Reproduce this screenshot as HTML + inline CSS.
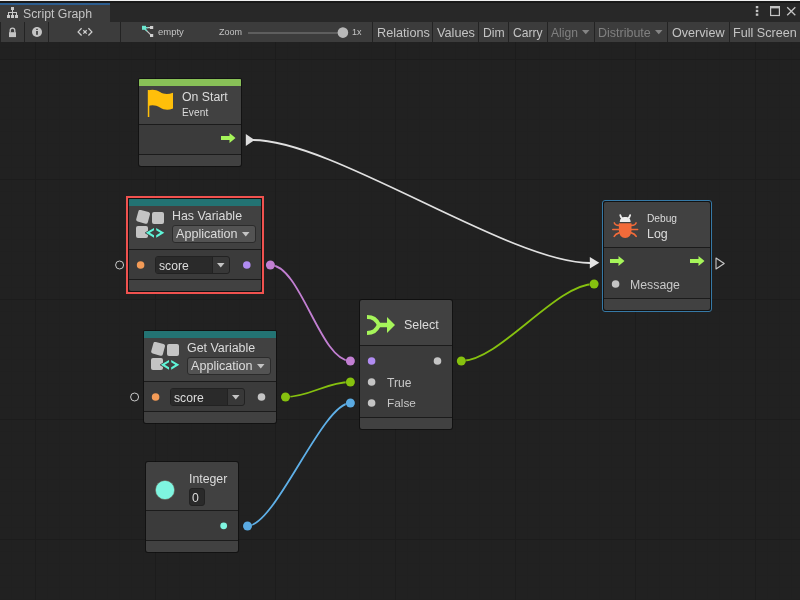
<!DOCTYPE html><html><head><meta charset="utf-8"><style>
*{margin:0;padding:0;box-sizing:border-box}
html,body{width:800px;height:600px;overflow:hidden;background:#202020;font-family:"Liberation Sans",sans-serif;color:#d2d2d2}
.a{position:absolute}
.tb{position:absolute;top:22px;height:20px;background:#3c3c3c;font-size:12px;line-height:20px;color:#c4c4c4;white-space:nowrap}
.dis{color:#808080}
.node{position:absolute;background:#3c3c3c;border-radius:2px;box-shadow:0 0 0 1px rgba(0,0,0,.45)}
.sec{position:absolute;left:0;right:0}
.t{position:absolute;white-space:nowrap;line-height:1;will-change:transform}
.dot{position:absolute;border-radius:50%}
</style></head><body>
<svg class="a" style="left:0;top:0" width="800" height="600"><rect x="0" y="42" width="800" height="558" fill="#212121"/><rect x="11" y="42" width="1" height="558" fill="#202020"/><rect x="23" y="42" width="1" height="558" fill="#202020"/><rect x="47" y="42" width="1" height="558" fill="#202020"/><rect x="59" y="42" width="1" height="558" fill="#202020"/><rect x="71" y="42" width="1" height="558" fill="#202020"/><rect x="83" y="42" width="1" height="558" fill="#202020"/><rect x="95" y="42" width="1" height="558" fill="#202020"/><rect x="107" y="42" width="1" height="558" fill="#202020"/><rect x="119" y="42" width="1" height="558" fill="#202020"/><rect x="131" y="42" width="1" height="558" fill="#202020"/><rect x="143" y="42" width="1" height="558" fill="#202020"/><rect x="167" y="42" width="1" height="558" fill="#202020"/><rect x="179" y="42" width="1" height="558" fill="#202020"/><rect x="191" y="42" width="1" height="558" fill="#202020"/><rect x="203" y="42" width="1" height="558" fill="#202020"/><rect x="215" y="42" width="1" height="558" fill="#202020"/><rect x="227" y="42" width="1" height="558" fill="#202020"/><rect x="239" y="42" width="1" height="558" fill="#202020"/><rect x="251" y="42" width="1" height="558" fill="#202020"/><rect x="263" y="42" width="1" height="558" fill="#202020"/><rect x="287" y="42" width="1" height="558" fill="#202020"/><rect x="299" y="42" width="1" height="558" fill="#202020"/><rect x="311" y="42" width="1" height="558" fill="#202020"/><rect x="323" y="42" width="1" height="558" fill="#202020"/><rect x="335" y="42" width="1" height="558" fill="#202020"/><rect x="347" y="42" width="1" height="558" fill="#202020"/><rect x="359" y="42" width="1" height="558" fill="#202020"/><rect x="371" y="42" width="1" height="558" fill="#202020"/><rect x="383" y="42" width="1" height="558" fill="#202020"/><rect x="407" y="42" width="1" height="558" fill="#202020"/><rect x="419" y="42" width="1" height="558" fill="#202020"/><rect x="431" y="42" width="1" height="558" fill="#202020"/><rect x="443" y="42" width="1" height="558" fill="#202020"/><rect x="455" y="42" width="1" height="558" fill="#202020"/><rect x="467" y="42" width="1" height="558" fill="#202020"/><rect x="479" y="42" width="1" height="558" fill="#202020"/><rect x="491" y="42" width="1" height="558" fill="#202020"/><rect x="503" y="42" width="1" height="558" fill="#202020"/><rect x="527" y="42" width="1" height="558" fill="#202020"/><rect x="539" y="42" width="1" height="558" fill="#202020"/><rect x="551" y="42" width="1" height="558" fill="#202020"/><rect x="563" y="42" width="1" height="558" fill="#202020"/><rect x="575" y="42" width="1" height="558" fill="#202020"/><rect x="587" y="42" width="1" height="558" fill="#202020"/><rect x="599" y="42" width="1" height="558" fill="#202020"/><rect x="611" y="42" width="1" height="558" fill="#202020"/><rect x="623" y="42" width="1" height="558" fill="#202020"/><rect x="647" y="42" width="1" height="558" fill="#202020"/><rect x="659" y="42" width="1" height="558" fill="#202020"/><rect x="671" y="42" width="1" height="558" fill="#202020"/><rect x="683" y="42" width="1" height="558" fill="#202020"/><rect x="695" y="42" width="1" height="558" fill="#202020"/><rect x="707" y="42" width="1" height="558" fill="#202020"/><rect x="719" y="42" width="1" height="558" fill="#202020"/><rect x="731" y="42" width="1" height="558" fill="#202020"/><rect x="743" y="42" width="1" height="558" fill="#202020"/><rect x="767" y="42" width="1" height="558" fill="#202020"/><rect x="779" y="42" width="1" height="558" fill="#202020"/><rect x="791" y="42" width="1" height="558" fill="#202020"/><rect x="0" y="47" width="800" height="1" fill="#202020"/><rect x="0" y="71" width="800" height="1" fill="#202020"/><rect x="0" y="83" width="800" height="1" fill="#202020"/><rect x="0" y="95" width="800" height="1" fill="#202020"/><rect x="0" y="107" width="800" height="1" fill="#202020"/><rect x="0" y="119" width="800" height="1" fill="#202020"/><rect x="0" y="131" width="800" height="1" fill="#202020"/><rect x="0" y="143" width="800" height="1" fill="#202020"/><rect x="0" y="155" width="800" height="1" fill="#202020"/><rect x="0" y="167" width="800" height="1" fill="#202020"/><rect x="0" y="191" width="800" height="1" fill="#202020"/><rect x="0" y="203" width="800" height="1" fill="#202020"/><rect x="0" y="215" width="800" height="1" fill="#202020"/><rect x="0" y="227" width="800" height="1" fill="#202020"/><rect x="0" y="239" width="800" height="1" fill="#202020"/><rect x="0" y="251" width="800" height="1" fill="#202020"/><rect x="0" y="263" width="800" height="1" fill="#202020"/><rect x="0" y="275" width="800" height="1" fill="#202020"/><rect x="0" y="287" width="800" height="1" fill="#202020"/><rect x="0" y="311" width="800" height="1" fill="#202020"/><rect x="0" y="323" width="800" height="1" fill="#202020"/><rect x="0" y="335" width="800" height="1" fill="#202020"/><rect x="0" y="347" width="800" height="1" fill="#202020"/><rect x="0" y="359" width="800" height="1" fill="#202020"/><rect x="0" y="371" width="800" height="1" fill="#202020"/><rect x="0" y="383" width="800" height="1" fill="#202020"/><rect x="0" y="395" width="800" height="1" fill="#202020"/><rect x="0" y="407" width="800" height="1" fill="#202020"/><rect x="0" y="431" width="800" height="1" fill="#202020"/><rect x="0" y="443" width="800" height="1" fill="#202020"/><rect x="0" y="455" width="800" height="1" fill="#202020"/><rect x="0" y="467" width="800" height="1" fill="#202020"/><rect x="0" y="479" width="800" height="1" fill="#202020"/><rect x="0" y="491" width="800" height="1" fill="#202020"/><rect x="0" y="503" width="800" height="1" fill="#202020"/><rect x="0" y="515" width="800" height="1" fill="#202020"/><rect x="0" y="527" width="800" height="1" fill="#202020"/><rect x="0" y="551" width="800" height="1" fill="#202020"/><rect x="0" y="563" width="800" height="1" fill="#202020"/><rect x="0" y="575" width="800" height="1" fill="#202020"/><rect x="0" y="587" width="800" height="1" fill="#202020"/><rect x="0" y="599" width="800" height="1" fill="#202020"/><rect x="35" y="42" width="1" height="558" fill="#1c1c1c"/><rect x="155" y="42" width="1" height="558" fill="#1c1c1c"/><rect x="275" y="42" width="1" height="558" fill="#1c1c1c"/><rect x="395" y="42" width="1" height="558" fill="#1c1c1c"/><rect x="515" y="42" width="1" height="558" fill="#1c1c1c"/><rect x="635" y="42" width="1" height="558" fill="#1c1c1c"/><rect x="755" y="42" width="1" height="558" fill="#1c1c1c"/><rect x="0" y="59" width="800" height="1" fill="#1c1c1c"/><rect x="0" y="179" width="800" height="1" fill="#1c1c1c"/><rect x="0" y="299" width="800" height="1" fill="#1c1c1c"/><rect x="0" y="419" width="800" height="1" fill="#1c1c1c"/><rect x="0" y="539" width="800" height="1" fill="#1c1c1c"/></svg>
<div class="a" style="left:0;top:0;width:800px;height:22px;background:#282828"></div>
<div class="a" style="left:0;top:0;width:800px;height:1px;background:#f0f0f0"></div>
<div class="a" style="left:0;top:1px;width:800px;height:2px;background:#191919"></div>
<div class="a" style="left:0;top:3px;width:110px;height:19px;background:#3c3c3c;border-top:2px solid #2c5d8f"></div>
<svg class="a" style="left:0;top:0" width="22" height="22" viewBox="0 0 22 22" shape-rendering="crispEdges"><rect x="11" y="7" width="3" height="3" fill="#c8c8c8"/><rect x="12" y="10" width="1" height="2" fill="#c8c8c8"/><rect x="8" y="12" width="9" height="1" fill="#c8c8c8"/><rect x="8" y="12" width="1" height="3" fill="#c8c8c8"/><rect x="12" y="12" width="1" height="3" fill="#c8c8c8"/><rect x="16" y="12" width="1" height="3" fill="#c8c8c8"/><rect x="7" y="15" width="3" height="3" fill="#c8c8c8"/><rect x="11" y="15" width="3" height="3" fill="#c8c8c8"/><rect x="15" y="15" width="3" height="3" fill="#c8c8c8"/></svg>
<div class="t" style="left:23px;top:7.99px;font-size:12.3px;color:#c4c4c4;">Script Graph</div>
<svg class="a" style="left:740px;top:0" width="60" height="22" viewBox="740 0 60 22"><rect x="755.8" y="6" width="2.5" height="2.3" fill="#c4c4c4"/><rect x="755.8" y="9.8" width="2.5" height="2.3" fill="#c4c4c4"/><rect x="755.8" y="13.5" width="2.5" height="2.3" fill="#c4c4c4"/><rect x="770.6" y="6.6" width="8.8" height="8.9" fill="none" stroke="#c4c4c4" stroke-width="1.2"/><rect x="770.6" y="6.6" width="8.8" height="1.8" fill="#c4c4c4"/><path d="M787.2 7.2 L795.3 15.2 M795.3 7.2 L787.2 15.2" stroke="#c4c4c4" stroke-width="1.3"/></svg>
<div class="a" style="left:0;top:22px;width:800px;height:20px;background:#232323"></div>
<div class="tb " style="left:1px;width:23px"></div>
<div class="tb " style="left:25px;width:23px"></div>
<div class="tb " style="left:49px;width:71px"></div>
<div class="tb " style="left:121px;width:251px"></div>
<div class="tb " style="left:373px;width:59px"></div>
<div class="tb " style="left:433px;width:45px"></div>
<div class="tb " style="left:479px;width:29px"></div>
<div class="tb " style="left:509px;width:38px"></div>
<div class="tb " style="left:548px;width:46px"></div>
<div class="tb " style="left:595px;width:72px"></div>
<div class="tb " style="left:668px;width:61px"></div>
<div class="tb " style="left:730px;width:71px"></div>
<svg class="a" style="left:8px;top:27px" width="9" height="11" viewBox="0 0 9 11"><path d="M2.2 5.5 V3.4 A2.3 2.3 0 0 1 6.8 3.4 V5.5" fill="none" stroke="#c4c4c4" stroke-width="1.3"/><rect x="1" y="5.2" width="7" height="4.9" fill="#c4c4c4"/></svg>
<svg class="a" style="left:32px;top:27px" width="10" height="10" viewBox="0 0 10 10"><circle cx="5" cy="4.95" r="5" fill="#c4c4c4"/><rect x="4.15" y="4" width="1.7" height="3.8" fill="#3c3c3c"/><rect x="4.15" y="1.8" width="1.7" height="1.1" fill="#3c3c3c"/></svg>
<svg class="a" style="left:70px;top:24px" width="30" height="16" viewBox="70 24 30 16"><path d="M81.6 28.3 L78.1 31.9 L81.6 35.5 M88.4 28.3 L91.9 31.9 L88.4 35.5 M83.3 30.2 L86.7 33.6 M86.7 30.2 L83.3 33.6" fill="none" stroke="#cfcfcf" stroke-width="1.25"/></svg>
<svg class="a" style="left:136px;top:22px" width="24" height="20" viewBox="136 22 24 20"><path d="M144 27.6 H151 M144.5 28.6 L151.6 35.6" stroke="#c4c4c4" stroke-width="1.3"/><path d="M145 27.6 H148 M145.5 29.6 L147 31" stroke="#6cdcc8" stroke-width="1.3"/><rect x="142" y="25.8" width="4" height="4" fill="#6ce8d0"/><rect x="150" y="26" width="3.2" height="3" fill="#d0d0d0"/><rect x="150" y="34" width="3.2" height="3" fill="#d0d0d0"/></svg>
<div class="t" style="left:158px;top:26.5px;font-size:9.5px;color:#c4c4c4">empty</div>
<div class="t" style="left:219px;top:27.7px;font-size:9px;color:#c4c4c4">Zoom</div>
<div class="a" style="left:248px;top:32px;width:95px;height:2px;background:#5e5e5e"></div>
<svg class="a" style="left:330px;top:22px" width="20" height="20" viewBox="330 22 20 20"><circle cx="342.9" cy="32.6" r="5.3" fill="#b8b8b8"/></svg>
<div class="t" style="left:352px;top:27.7px;font-size:9px;color:#c4c4c4">1x</div>
<div class="t" style="left:376.5px;top:26.85px;font-size:12.7px;color:#c4c4c4;">Relations</div>
<div class="t" style="left:436.5px;top:26.85px;font-size:12.7px;color:#c4c4c4;">Values</div>
<div class="t" style="left:483px;top:27.27px;font-size:12.2px;color:#c4c4c4;">Dim</div>
<div class="t" style="left:512.5px;top:27.36px;font-size:12.1px;color:#c4c4c4;">Carry</div>
<div class="t" style="left:551px;top:27.36px;font-size:12.1px;color:#808080;">Align</div>
<div class="t" style="left:598px;top:27.02px;font-size:12.5px;color:#808080;">Distribute</div>
<div class="t" style="left:672px;top:26.93px;font-size:12.6px;color:#c4c4c4;">Overview</div>
<div class="t" style="left:732.5px;top:26.93px;font-size:12.6px;color:#c4c4c4;">Full Screen</div>
<svg class="a" style="left:582.3px;top:29.8px" width="8" height="5"><path d="M0 0 H7.5 L3.75 4.3 Z" fill="#858585"/></svg>
<svg class="a" style="left:655px;top:29.8px" width="8" height="5"><path d="M0 0 H7.5 L3.75 4.3 Z" fill="#858585"/></svg>
<div class="node" style="left:139px;top:79px;width:102px;height:87px;background:#414141;overflow:hidden;border-radius:1px 1px 2px 2px"><div class="sec" style="top:0;height:7px;background:#88c057"></div><div class="sec" style="top:45px;height:1px;background:#1b1b1b"></div><div class="sec" style="top:46px;height:29px;background:#3b3b3b"></div><div class="sec" style="top:75px;height:1px;background:#1b1b1b"></div></div>
<svg class="a" style="left:147px;top:89px" width="27" height="29" viewBox="0 0 27 29"><rect x="0.8" y="1" width="1.5" height="27" fill="#ffbf0a"/><path d="M1 1.5 C5 0 9 0.5 13 3 C17 5.5 21 5.5 26 3.8 V19.5 C21 21.5 17 21 13 18.5 C9 16 5 15.8 1 17 Z" fill="#ffbf0a"/></svg>
<div class="t" style="left:181.6px;top:90.59px;font-size:12.3px;color:#dcdcdc;">On Start</div>
<div class="t" style="left:181.6px;top:108.05px;font-size:10.1px;color:#dcdcdc;letter-spacing:0.1px">Event</div>
<svg class="a" style="left:221px;top:133px" width="15" height="10" viewBox="0 0 15 10"><path d="M0 3 H8.5 V0 L14.5 5 L8.5 10 V7 H0 Z" fill="#a6f55a"/></svg>
<svg class="a" style="left:244px;top:132px" width="13" height="16" viewBox="244 132 13 16"><path d="M245.8 133.9 L254.6 140 L245.8 146.1 Z" fill="#dedede"/></svg>
<div class="a" style="left:126px;top:196px;width:138px;height:98px;border:2px solid #f0524f;border-radius:0"></div>
<div class="node" style="left:129px;top:199px;width:132px;height:92px;background:#414141;overflow:hidden;border-radius:1px 1px 2px 2px"><div class="sec" style="top:0;height:7px;background:#237373"></div><div class="sec" style="top:50px;height:1px;background:#1b1b1b"></div><div class="sec" style="top:51px;height:29px;background:#3b3b3b"></div><div class="sec" style="top:80px;height:1px;background:#1b1b1b"></div></div>
<svg class="a" style="left:136px;top:210px" width="30" height="30" viewBox="0 0 30 30"><rect x="1.1" y="0.8" width="12" height="12" rx="2" fill="#c4c4c4" transform="rotate(15 7.1 6.8)"/><rect x="16" y="2" width="12" height="12" rx="2" fill="#c4c4c4"/><rect x="0" y="16" width="12" height="12" rx="2" fill="#c4c4c4"/><path d="M9.8 22.8 L18 17.9 V20.3 L13.8 22.8 L18 25.3 V27.7 Z M28.3 22.8 L20.2 17.9 V20.3 L24.3 22.8 L20.2 25.3 V27.7 Z" fill="#5ff5d8" stroke="#414141" stroke-width="1.5" paint-order="stroke" stroke-linejoin="round"/></svg>
<div class="t" style="left:172.3px;top:209.50px;font-size:12.4px;color:#dcdcdc;">Has Variable</div>
<div class="a" style="left:172px;top:225px;width:84px;height:18px;background:#535353;border:1px solid #2b2b2b;border-radius:3px"></div>
<div class="t" style="left:175.5px;top:227.93px;font-size:12.6px;color:#dcdcdc;">Application</div>
<svg class="a" style="left:242px;top:232px" width="8" height="5"><path d="M0 0 H7.5 L3.75 4.5 Z" fill="#c4c4c4"/></svg>
<svg class="a" style="left:114px;top:259px" width="13" height="13"><circle cx="5.599999999999994" cy="6" r="4.0" fill="none" stroke="#c8c8c8" stroke-width="1"/></svg>
<svg class="a" style="left:135px;top:260px" width="11" height="11"><circle cx="5.599999999999994" cy="5" r="3.8" fill="#f39b57"/></svg>
<div class="a" style="left:155px;top:256px;width:75px;height:18px;background:#383838;border:1px solid #222222;border-radius:3px"></div>
<div class="a" style="left:156px;top:257px;width:55.599999999999994px;height:16px;background:#2a2a2a;border-radius:2px 0 0 2px"></div>
<div class="a" style="left:211.6px;top:256px;width:1px;height:18px;background:#222222"></div>
<div class="t" style="left:158.5px;top:260.07px;font-size:12.2px;color:#dcdcdc;">score</div>
<svg class="a" style="left:217.1px;top:263px" width="8" height="5"><path d="M0 0 H7.5 L3.75 4.5 Z" fill="#c4c4c4"/></svg>
<svg class="a" style="left:242px;top:260px" width="11" height="11"><circle cx="4.800000000000011" cy="5" r="3.8" fill="#b18cf2"/></svg>
<div class="node" style="left:144px;top:331px;width:132px;height:92px;background:#414141;overflow:hidden;border-radius:1px 1px 2px 2px"><div class="sec" style="top:0;height:7px;background:#237373"></div><div class="sec" style="top:50px;height:1px;background:#1b1b1b"></div><div class="sec" style="top:51px;height:29px;background:#3b3b3b"></div><div class="sec" style="top:80px;height:1px;background:#1b1b1b"></div></div>
<svg class="a" style="left:151px;top:342px" width="30" height="30" viewBox="0 0 30 30"><rect x="1.1" y="0.8" width="12" height="12" rx="2" fill="#c4c4c4" transform="rotate(15 7.1 6.8)"/><rect x="16" y="2" width="12" height="12" rx="2" fill="#c4c4c4"/><rect x="0" y="16" width="12" height="12" rx="2" fill="#c4c4c4"/><path d="M9.8 22.8 L18 17.9 V20.3 L13.8 22.8 L18 25.3 V27.7 Z M28.3 22.8 L20.2 17.9 V20.3 L24.3 22.8 L20.2 25.3 V27.7 Z" fill="#5ff5d8" stroke="#414141" stroke-width="1.5" paint-order="stroke" stroke-linejoin="round"/></svg>
<div class="t" style="left:187.2px;top:342.36px;font-size:12.45px;color:#dcdcdc;">Get Variable</div>
<div class="a" style="left:187px;top:357px;width:84px;height:18px;background:#535353;border:1px solid #2b2b2b;border-radius:3px"></div>
<div class="t" style="left:190.5px;top:359.93px;font-size:12.6px;color:#dcdcdc;">Application</div>
<svg class="a" style="left:257px;top:364px" width="8" height="5"><path d="M0 0 H7.5 L3.75 4.5 Z" fill="#c4c4c4"/></svg>
<svg class="a" style="left:129px;top:391px" width="13" height="13"><circle cx="5.599999999999994" cy="6" r="4.0" fill="none" stroke="#c8c8c8" stroke-width="1"/></svg>
<svg class="a" style="left:150px;top:392px" width="11" height="11"><circle cx="5.599999999999994" cy="5" r="3.8" fill="#f39b57"/></svg>
<div class="a" style="left:170px;top:388px;width:75px;height:18px;background:#383838;border:1px solid #222222;border-radius:3px"></div>
<div class="a" style="left:171px;top:389px;width:55.599999999999994px;height:16px;background:#2a2a2a;border-radius:2px 0 0 2px"></div>
<div class="a" style="left:226.6px;top:388px;width:1px;height:18px;background:#222222"></div>
<div class="t" style="left:173.5px;top:392.07px;font-size:12.2px;color:#dcdcdc;">score</div>
<svg class="a" style="left:232.1px;top:395px" width="8" height="5"><path d="M0 0 H7.5 L3.75 4.5 Z" fill="#c4c4c4"/></svg>
<svg class="a" style="left:256px;top:392px" width="11" height="11"><circle cx="5.5" cy="5" r="3.8" fill="#c4c4c4"/></svg>
<div class="node" style="left:360px;top:300px;width:92px;height:129px;background:#414141;overflow:hidden;border-radius:2px"><div class="sec" style="top:45px;height:1px;background:#1b1b1b"></div><div class="sec" style="top:46px;height:71px;background:#3b3b3b"></div><div class="sec" style="top:117px;height:1px;background:#1b1b1b"></div></div>
<svg class="a" style="left:364px;top:312px" width="34" height="26" viewBox="0 0 34 26"><path d="M3 5 C9 5 12 7 15 13 C12 19 9 21 3 21" fill="none" stroke="#a6f55a" stroke-width="4"/><path d="M14 13 H25" stroke="#a6f55a" stroke-width="4.5"/><path d="M23 5 L31 13 L23 21 Z" fill="#a6f55a"/></svg>
<div class="t" style="left:403.6px;top:318.72px;font-size:12.5px;color:#dcdcdc;">Select</div>
<svg class="a" style="left:366px;top:356px" width="11" height="11"><circle cx="5.600000000000023" cy="5" r="3.8" fill="#b18cf2"/></svg>
<svg class="a" style="left:432px;top:356px" width="11" height="11"><circle cx="5.5" cy="5" r="3.8" fill="#c4c4c4"/></svg>
<svg class="a" style="left:366px;top:377px" width="11" height="11"><circle cx="5.600000000000023" cy="5" r="3.8" fill="#c4c4c4"/></svg>
<svg class="a" style="left:366px;top:398px" width="11" height="11"><circle cx="5.600000000000023" cy="5" r="3.8" fill="#c4c4c4"/></svg>
<div class="t" style="left:387px;top:377.16px;font-size:12.1px;color:#c8c8c8;">True</div>
<div class="t" style="left:386.5px;top:398.41px;font-size:11.8px;color:#c8c8c8;">False</div>
<div class="a" style="left:602px;top:200px;width:110px;height:112px;border:1px solid #3679a6;border-radius:3px"></div>
<div class="node" style="left:604px;top:202px;width:106px;height:108px;background:#414141;overflow:hidden;border-radius:2px"><div class="sec" style="top:45px;height:1px;background:#1b1b1b"></div><div class="sec" style="top:46px;height:50px;background:#3b3b3b"></div><div class="sec" style="top:96px;height:1px;background:#1b1b1b"></div></div>
<svg class="a" style="left:608px;top:210px" width="34" height="32" viewBox="0 0 34 32"><path d="M12.3 5.2 C12.6 6.5 13.2 7.5 14.2 8.5 M22.1 5.2 C21.8 6.5 21.2 7.5 20.2 8.5" stroke="#eeeeee" stroke-width="1.8" stroke-linecap="round"/><path d="M11.8 12 C11.8 8.5 14 6.9 17.2 6.9 C20.4 6.9 22.6 8.5 22.6 12 Z" fill="#eeeeee"/><path d="M10.9 13.3 H23.5 V20 C23.5 25 20.8 28 17.2 28 C13.6 28 10.9 25 10.9 20 Z" fill="#f26b3a"/><path d="M11 15.4 C8.5 15.4 6.8 14.8 6.3 12.9 M23.4 15.4 C25.9 15.4 27.6 14.8 28.1 12.9 M4.8 19.5 H11 M23.4 19.5 H29.6 M11 22.9 C8.5 23.5 6.9 25 6.2 26.4 M23.4 22.9 C25.9 23.5 27.5 25 28.2 26.4" fill="none" stroke="#f26b3a" stroke-width="1.6" stroke-linecap="round"/></svg>
<div class="t" style="left:646.5px;top:213.67px;font-size:10.2px;color:#dcdcdc;">Debug</div>
<div class="t" style="left:646.5px;top:227.50px;font-size:12.4px;color:#dcdcdc;">Log</div>
<svg class="a" style="left:610px;top:256px" width="15" height="10" viewBox="0 0 15 10"><path d="M0 3 H8.5 V0 L14.5 5 L8.5 10 V7 H0 Z" fill="#a6f55a"/></svg>
<svg class="a" style="left:690px;top:256px" width="15" height="10" viewBox="0 0 15 10"><path d="M0 3 H8.5 V0 L14.5 5 L8.5 10 V7 H0 Z" fill="#a6f55a"/></svg>
<svg class="a" style="left:610px;top:279px" width="11" height="11"><circle cx="5.600000000000023" cy="5" r="3.8" fill="#c4c4c4"/></svg>
<div class="t" style="left:629.5px;top:279.39px;font-size:12.3px;color:#c8c8c8;">Message</div>
<svg class="a" style="left:714.5px;top:256.5px" width="11" height="13" viewBox="0 0 11 13"><path d="M1 1 L9.2 6.5 L1 12 Z" fill="none" stroke="#c8c8c8" stroke-width="1.1" stroke-linejoin="round"/></svg>
<div class="node" style="left:146px;top:462px;width:92px;height:90px;background:#414141;overflow:hidden;border-radius:2px"><div class="sec" style="top:48px;height:1px;background:#1b1b1b"></div><div class="sec" style="top:49px;height:29px;background:#3b3b3b"></div><div class="sec" style="top:78px;height:1px;background:#1b1b1b"></div></div>
<svg class="a" style="left:150px;top:475px" width="30" height="30" viewBox="150 475 30 30"><circle cx="165" cy="490" r="9.6" fill="#7ff5e0" stroke="#6a5a50" stroke-width="0.6"/></svg>
<div class="t" style="left:188.5px;top:472.59px;font-size:12.3px;color:#dcdcdc;">Integer</div>
<div class="a" style="left:189px;top:488px;width:16px;height:18px;background:#2a2a2a;border:1px solid #222222;border-radius:3px"></div>
<div class="t" style="left:192.2px;top:492.19px;font-size:12.3px;color:#dcdcdc;">0</div>
<svg class="a" style="left:219px;top:521px" width="10" height="10"><circle cx="4.699999999999989" cy="4.7999999999999545" r="3.4" fill="#7ff5e0"/></svg>
<svg class="a" style="left:0;top:0" width="800" height="600"><path d="M253 140 C333 140 510 263 590 263" fill="none" stroke="#e0e0e0" stroke-width="1.8"/><path d="M270.4 265 C300.4 265 320.4 361 350.4 361" fill="none" stroke="#c27fd2" stroke-width="1.8"/><path d="M285.5 397 C309.5 397 326.4 382 350.4 382" fill="none" stroke="#86c10f" stroke-width="1.8"/><path d="M247.5 526 C275.5 526 322.4 403 350.4 403" fill="none" stroke="#5fb0e8" stroke-width="1.8"/><path d="M461.3 361 C499.3 361 556.1 284 594.1 284" fill="none" stroke="#86c10f" stroke-width="1.8"/><circle cx="270.4" cy="265" r="5.1" fill="#1a1a1a" fill-opacity="0.5"/><circle cx="270.4" cy="265" r="4.5" fill="#c27fd2"/><circle cx="350.4" cy="361" r="5.1" fill="#1a1a1a" fill-opacity="0.5"/><circle cx="350.4" cy="361" r="4.5" fill="#c27fd2"/><circle cx="285.5" cy="397" r="5.1" fill="#1a1a1a" fill-opacity="0.5"/><circle cx="285.5" cy="397" r="4.5" fill="#86c10f"/><circle cx="350.4" cy="382" r="5.1" fill="#1a1a1a" fill-opacity="0.5"/><circle cx="350.4" cy="382" r="4.5" fill="#86c10f"/><circle cx="247.5" cy="526" r="5.1" fill="#1a1a1a" fill-opacity="0.5"/><circle cx="247.5" cy="526" r="4.5" fill="#5aaae2"/><circle cx="350.4" cy="403" r="5.1" fill="#1a1a1a" fill-opacity="0.5"/><circle cx="350.4" cy="403" r="4.5" fill="#5aaae2"/><circle cx="461.3" cy="361" r="5.1" fill="#1a1a1a" fill-opacity="0.5"/><circle cx="461.3" cy="361" r="4.5" fill="#86c10f"/><circle cx="594.1" cy="284" r="5.1" fill="#1a1a1a" fill-opacity="0.5"/><circle cx="594.1" cy="284" r="4.5" fill="#86c10f"/><path d="M589.8 257.1 L599.3 262.8 L589.8 268.6 Z" fill="#e4e4e4"/></svg>
</body></html>
